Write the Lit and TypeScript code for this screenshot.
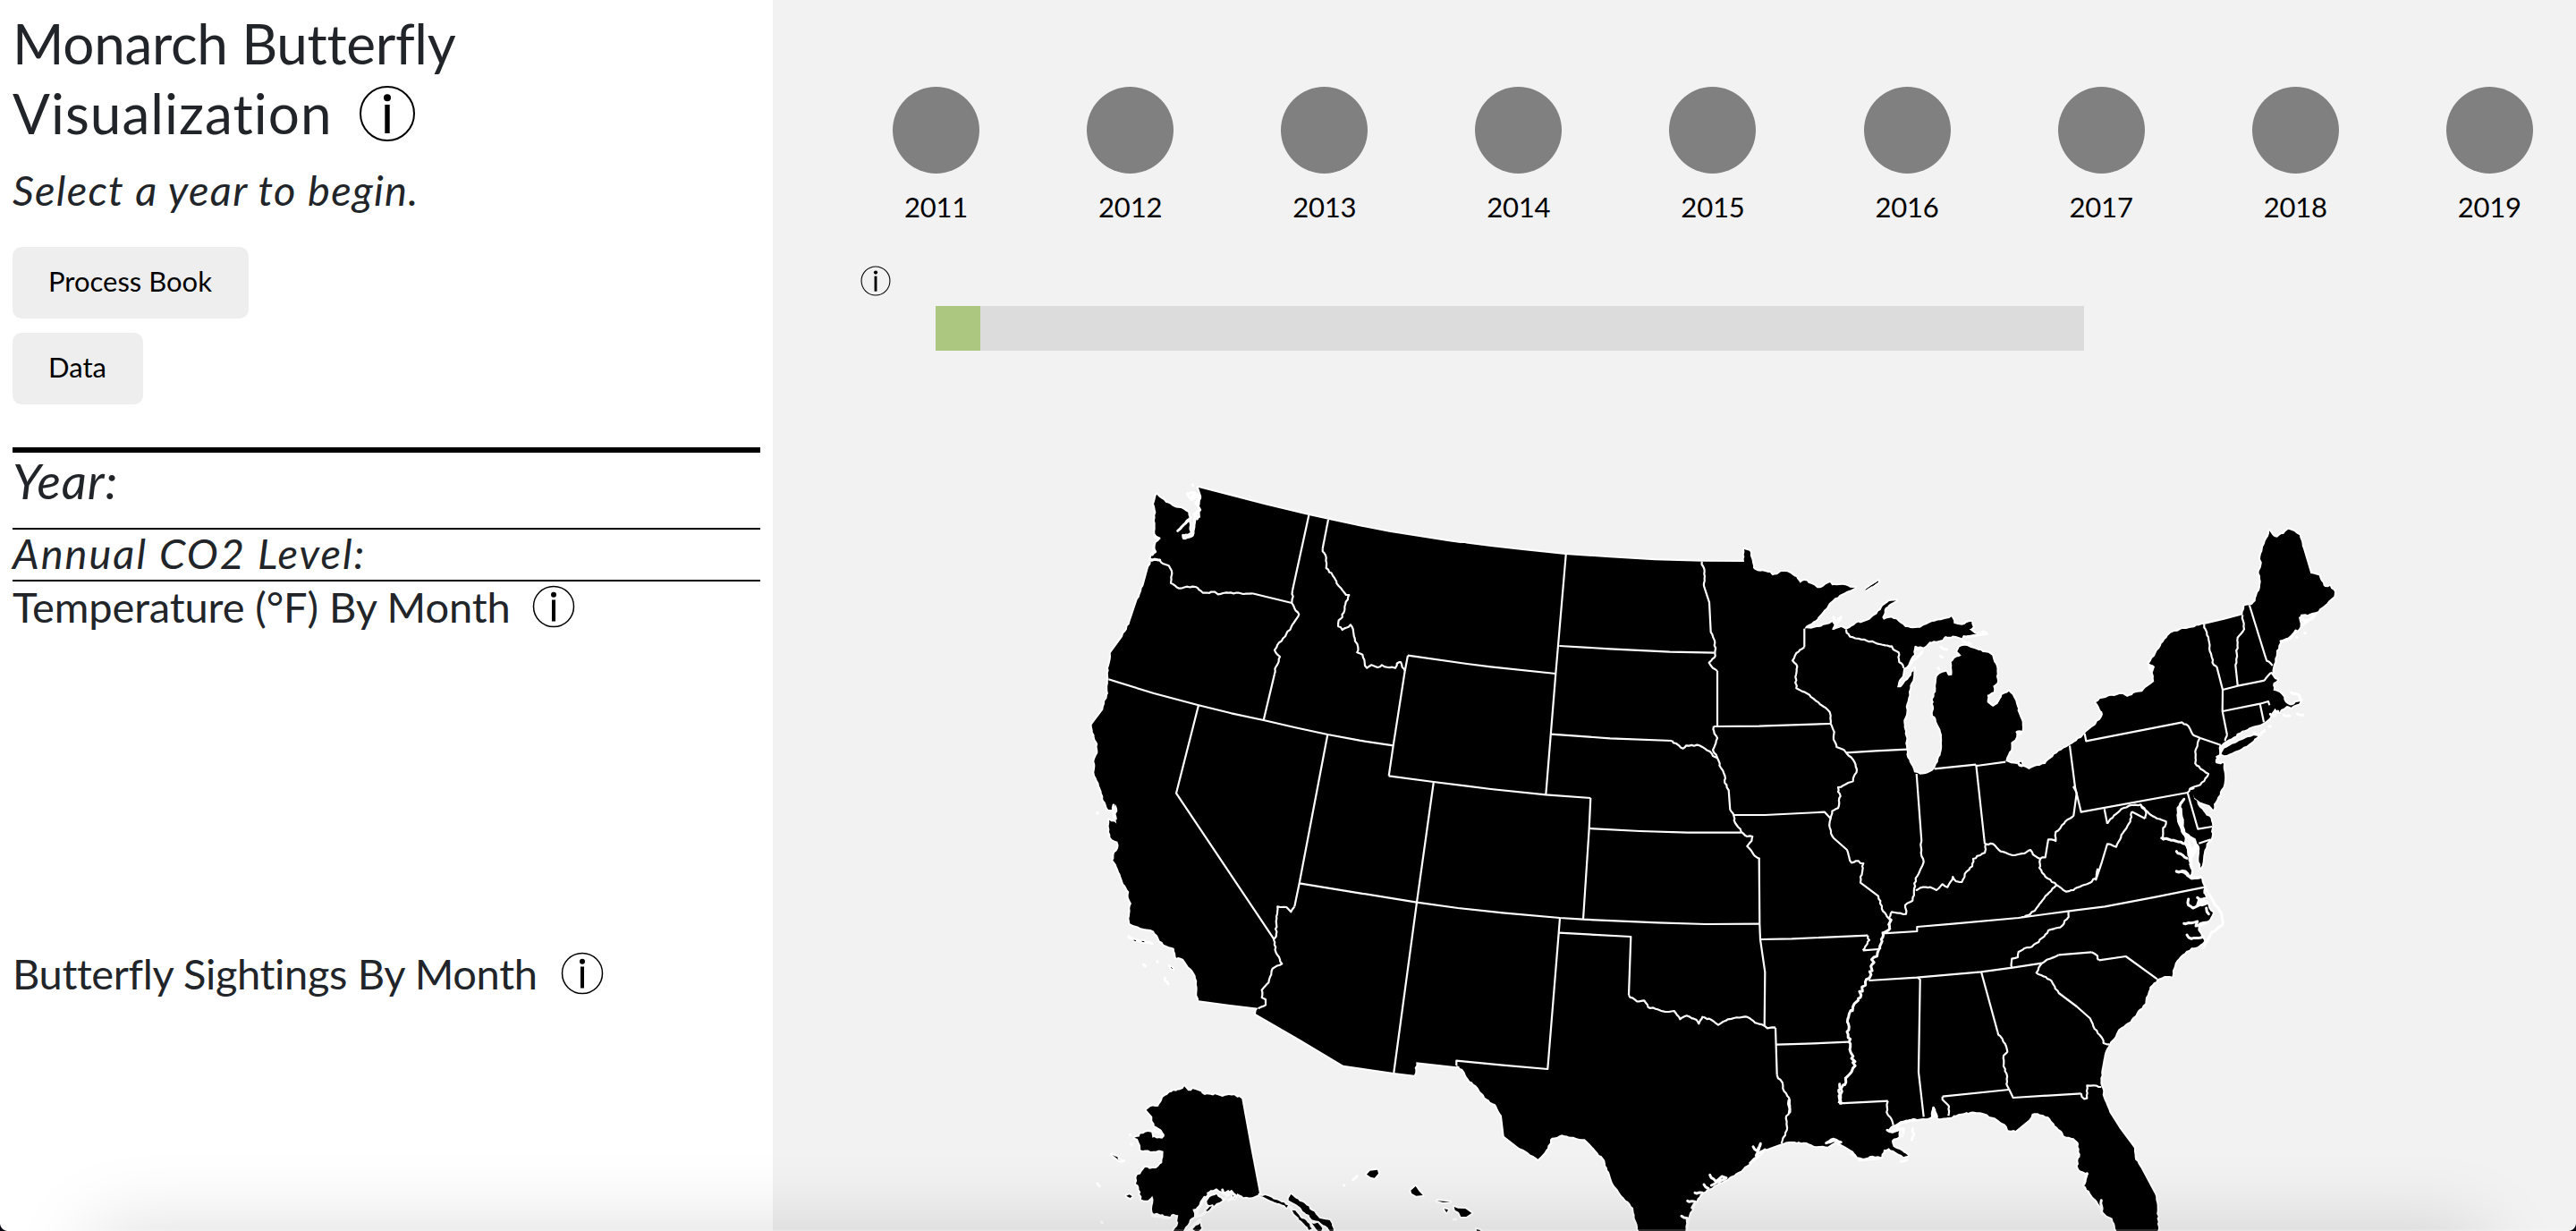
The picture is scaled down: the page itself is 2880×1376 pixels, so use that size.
import { LitElement, html, svg, css } from "lit";
import { customElement, property } from "lit/decorators.js";

type Pt = [number, number];

/* The map is digitised in tiles, three units to a pixel; each tile has its own origin. */
const TILES: Record<string, Pt> = {
  A: [1200, 520],
  B: [1200, 880],
  C: [1600, 560],
  D: [1620, 900],
  E: [1920, 600],
  F: [2260, 570],
  G: [2000, 960],
};

/** Parses "A x,y x,y B x,y ..." into page points. */
function points(src: string): Pt[] {
  let origin: Pt = [0, 0];
  const out: Pt[] = [];
  for (const token of src.trim().split(/\s+/)) {
    if (TILES[token]) {
      origin = TILES[token];
      continue;
    }
    const [x, y] = token.split(",").map(Number);
    out.push([origin[0] + x / 3, origin[1] + y / 3]);
  }
  return out;
}

/** Adds small irregularities to short segments, leaving surveyed straight lines alone. */
function roughen(pts: Pt[], amount: number): Pt[] {
  let seed = 7;
  const rnd = () => {
    seed = (seed * 16807) % 2147483647;
    return seed / 2147483647 - 0.5;
  };
  const out: Pt[] = [pts[0]];
  for (let i = 1; i < pts.length; i++) {
    const [ax, ay] = pts[i - 1];
    const [bx, by] = pts[i];
    const len = Math.hypot(bx - ax, by - ay);
    if (len > 4 && len < 19) {
      const n = Math.round(len / 3);
      for (let k = 1; k < n; k++) {
        const t = k / n;
        out.push([ax + (bx - ax) * t + rnd() * amount, ay + (by - ay) * t + rnd() * amount]);
      }
    }
    out.push([bx, by]);
  }
  return out;
}

function path(src: string, amount = 0, close = false): string {
  const pts = amount ? roughen(points(src), amount) : points(src);
  return "M" + pts.map((p) => p[0].toFixed(1) + " " + p[1].toFixed(1)).join("L") + (close ? "Z" : "");
}

const MAINLAND = `
A 420,75 640,132 790,168 855,182 960,205 1060,224 1160,240 1260,256 1320,264
C 100,140 200,153 300,164 450,180 600,190 750,199 908,203 1050,204 1050,162 1068,167 1073,190 1080,225 1095,235 1110,235 1138,240
E 178,122 185,130 200,127 212,118 235,118 252,128 265,135 278,155 292,147 305,155 325,163 335,172 355,167 378,153 385,163 410,162 430,163 445,170 462,170
425,188 395,205 370,232 345,262 315,290 292,308 315,308 340,303 385,286 392,296 385,312 400,308 415,303 432,312
445,305 465,290 490,286 510,278 525,265 540,250 555,232 575,217 600,213 575,228 560,245 553,270 558,278 575,272 600,277 615,290 630,303 655,307 680,305 700,295 720,285 750,280 785,268
793,290 810,295 830,293 853,285 857,302 845,310 858,320 870,327 850,330 825,330 820,340 800,333 765,333 755,345 735,350 712,352 700,365 690,372 670,375 660,372 660,395 648,410 640,430 625,440
622,460 610,480 603,505 615,505 630,485 645,470 660,440 658,465 650,490 642,520 640,540 632,570 634,590 625,615 626,640 632,670 634,712 637,740 650,765 660,790 680,797 705,793 728,778 740,755 750,725 753,690 750,655 735,620 722,590 726,570 722,545 733,520 735,480
743,462 755,455 768,452 775,466 787,464 785,420 795,408 818,398 805,385 812,370 830,365 850,372 870,378 900,388 922,398 925,410 932,425 938,460 938,490 925,500 927,520 905,530 905,555 925,570 940,560 955,530 978,518 990,530 1000,550 1010,590 1022,620 1022,650 1005,650 998,680 985,690 985,715 970,740 967,752 985,760 1005,762 1020,755 1025,770 1045,780 1065,770 1100,762 1130,730 1160,710 1180,700
F 185,775 212,750 235,730 262,705 273,685 262,665 250,645 270,632 300,623 340,618 355,627 385,612 405,610 425,590 445,575 440,545 447,525 428,515 447,490 462,465 480,435 500,413 512,408 560,397 613,384 680,368 742,352 748,322 765,320
785,305 790,285 798,270 803,240 797,205 805,185 802,155 815,115 832,70 845,88 858,92 880,80 895,65 915,72 933,85 945,130 970,213 998,220 1005,238 1018,258 1035,255 1050,275 1048,290 1030,305 1010,325 995,340 975,345 960,352 940,350 930,360 935,380 930,400 910,415 890,435 875,435 862,455 855,480 850,510 843,530 842,545 838,550 845,560 858,570 845,580 845,605 865,612 880,628 885,645 900,655 915,652 937,638 930,650 905,662 890,657 880,665 865,678 850,665 840,680 832,698 815,712 790,722 740,740 710,762 683,777
668,790 665,820 655,835 665,850 678,850 680,880 680,915 665,955 650,980 643,1005 630,990 600,980 580,965 573,940 578,960 590,985 610,1010 635,1035 640,1062 635,1105 620,1120 612,1150 608,1180 600,1200 595,1170 598,1135 590,1120 575,1110 565,1090 550,1080 545,1050 540,1020 535,995 545,970 530,985 522,1015 522,1045 535,1080 548,1100 545,1115 555,1140 560,1165 562,1190 570,1210 565,1235 600,1235
G 1380,60 1395,95 1390,115 1398,128 1372,135 1365,155 1385,160 1405,152 1408,165 1422,180 1410,205 1375,215 1372,240 1385,262 1393,275 1375,292 1350,298 1320,320 1295,350 1285,395 1260,393 1235,403 1210,430 1197,465 1195,485 1170,510 1145,545 1105,572 1095,595 1075,620 1060,650 1052,690 1045,735 1048,762 1055,800 1075,850 1110,905 1158,970 1160,1000 1185,1045 1228,1125 1235,1180 1239,1235 1230,1270
1110,1270 1095,1240 1085,1205 1060,1190 1045,1165 1020,1135 990,1095 1005,1055 985,1048 972,1040 968,1030 977,990 970,950 955,937 930,932 900,900 870,865 835,853 815,855 805,875 760,912 735,910 725,890 690,868 650,852 610,848 570,855 535,867 500,870 492,838 482,835 477,865 450,870 410,872 375,880 350,893 332,912 345,920 370,912 368,932 345,945 350,965 380,980 400,995 385,1000 360,985 335,970 318,975 310,1000 280,995 250,1005 230,1000 215,980 180,960 155,945 130,965 85,963 50,950 0,948
D 1115,1135 1060,1155 1020,1190 985,1220 940,1248 890,1275 850,1300 820,1340 805,1375 790,1440
640,1440 625,1390 618,1350 580,1310 548,1265 530,1215 518,1185 485,1150 455,1120 410,1112 378,1105 345,1115 320,1165 298,1187 265,1165 230,1145 185,1110 178,1050 160,1010 120,980 90,940 60,912 45,885 25,873
B 1285,937 1150,922 1143,965 1075,957 905,932 760,845 612,760 620,740 520,728 420,715 415,690 415,650 400,615 375,585 360,572 345,572 338,540 320,535 290,515 270,482 240,475 190,457 187,440 195,390 185,370 187,350 165,315 150,275 133,245 138,220 150,205 148,182 130,175 120,150 120,110 145,122 137,95 148,80 142,58 130,75 118,75 102,45
A 100,1110 85,1065 70,1030 72,985 82,965 82,935 65,895 62,870 100,820 105,795 117,765 115,738 118,715 117,680 125,650 125,630 165,575 190,525 215,450 235,405 250,350 260,325 262,305 275,285 275,268 290,245 275,235 275,195 275,150 270,130 280,98 310,125 350,143 385,158 390,178 350,218 388,190 392,225 365,235 368,250 400,240 408,200 412,182 426,175 422,140 430,105`;

const LONG_ISLAND = "F 680,800 700,790 730,775 760,762 795,755 770,780 730,805 705,815 680,823 670,818";

const ALASKA = `B 245,1082 258,1072 285,1070 300,1040 335,1018 358,1015 372,1003 385,1018 400,1012 420,1018 440,1032 475,1030 500,1038 540,1033 565,1045
595,1210 625,1367 600,1375 570,1375 550,1362 540,1380 520,1350 505,1360 480,1345 455,1355 440,1375 425,1400 400,1415 405,1440 375,1475 365,1495
335,1495 352,1460 352,1435 335,1430 325,1440 300,1432 270,1430 265,1405 265,1370 250,1385 228,1382 220,1340 210,1330 215,1300 240,1275 255,1280 285,1272 298,1260 302,1220 270,1220 225,1215 220,1190 205,1175 235,1162 262,1157 265,1175 298,1178 305,1165 295,1148 272,1135 265,1105`;

const ALASKA_ISLES = [
  "B 625,1367 655,1372 690,1387 720,1402 715,1410 690,1395 660,1385",
  "B 722,1385 730,1365 745,1378 775,1395 800,1420 825,1445 860,1452 872,1480 868,1495 845,1470 820,1455 800,1450 775,1425 750,1400",
  "B 730,1410 745,1420 760,1440 780,1452 800,1480 790,1485 765,1455 740,1430",
  "B 800,1462 820,1460 835,1480 830,1492 815,1482",
  "B 448,1388 465,1370 480,1365 500,1385 480,1395 470,1405 450,1398",
  "B 445,1418 465,1405 460,1412 448,1422",
  "B 400,1482 425,1462 430,1478 415,1492",
  "B 178,1370 188,1366 197,1372 190,1377",
  "B 130,1232 138,1237 148,1240 160,1252 150,1248",
];

const HAWAII = [
  "B 984,1298 995,1286 1020,1283 1023,1295 1010,1310 997,1307",
  "B 1132,1352 1148,1338 1160,1355 1172,1368 1150,1370 1135,1362",
  "B 1220,1387 1240,1388 1264,1390 1240,1392",
  "B 1244,1414 1257,1417 1252,1426",
  "B 1277,1407 1290,1412 1315,1413 1336,1428 1318,1440 1300,1440 1293,1425 1280,1418",
  "B 1352,1482 1362,1484 1375,1496 1355,1496",
];

const SMALL_ISLES = [
  "E 497,178 515,165 540,150 520,165",
  "B 203,513 210,515",
  "B 230,517 238,518",
  "B 328,604 332,608",
];

const STRAIGHT = [
  "A 790,168 735,420",
  "A 855,182 836,280",
  "A 600,430 733,462",
  "A 675,700 638,855",
  "A 118,718 270,765 420,805 530,832 638,855 745,880 853,903 960,923 1073,940",
  "A 420,805 345,1100 B 672,508",
  "A 853,903 B 758,322 742,400",
  "A 1122,638 1112,690 1073,940 1058,1042",
  "A 1122,638 1320,666 C 200,556 418,579",
  "A 1058,1042 1208,1062 1320,1076 C 200,966 385,985 535,996",
  "A 1208,1065 B 1152,386 1075,957",
  "B 758,322 960,355 1152,386 1290,405 1440,421 D 372,378 450,383 700,394 860,399 1042,398",
  "C 452,180 418,579 385,985",
  "C 430,486 600,496 800,506 950,509",
  "C 402,782 600,796 808,804",
  "C 960,570 960,755",
  "C 948,756 1100,755 E 160,634 380,627",
  "C 1015,1053 1120,1053 E 160,933 360,923 380,945",
  "C 535,996 530,1098 D 450,383",
  "C 530,1098 700,1107 860,1112 1040,1112",
  "D 1040,178 1042,398 1044,450 1060,560 1058,740",
  "D 372,378 368,428 331,885 180,872 25,857 25,873",
  "D 368,428 610,441 603,637",
  "D 1095,746 1100,905",
  "D 1044,450 1150,448 G 265,257",
  "G 248,307 300,303",
  "D 1098,803 1200,800 G 200,614",
  "G 168,820 332,812",
  "E 292,308 292,370",
  "E 433,724 530,718 636,713",
  "E 668,795 685,1020",
  "E 728,778 867,764",
  "E 870,768 967,755",
  "E 868,764 897,1030",
  "G 315,250 430,243 430,228 550,218 770,198 940,175 1060,160 1230,128 1395,95",
  "G 268,408 430,398 645,379 750,365 848,350",
  "G 905,322 1015,313",
  "G 1040,340 1130,327 1235,403",
  "G 432,398 440,405 435,715 452,865",
  "G 645,379 700,580",
  "G 738,772 752,801 980,787",
  "G 738,774 515,797",
  "F 162,790 180,930 200,1013 557,948 592,1070 640,1062",
  "F 212,750 217,775 540,712",
  "F 600,765 668,788",
  "F 278,1003 288,1052",
  "F 415,1035 370,1012",
  "F 595,1118 635,1105",
  "F 655,525 675,603 674,675 690,755",
  "F 675,603 725,590 815,572",
  "F 765,320 820,498",
  "F 675,675 800,650 828,642 832,655",
  "F 800,650 813,712",
];

const WINDING = [
  "A 735,420 737,440 733,462 742,480 757,500 745,520 715,565 690,595 675,620 680,630 693,642 680,675 675,700",
  "A 836,280 848,310 848,345 870,370 890,405 915,435 925,435 910,475 902,510 890,520 888,540 902,552 915,545 930,535 938,550 945,590 955,610 952,628 970,635 978,672 985,680 1000,670 1020,678 1035,670 1055,678 1080,680 1085,665 1098,660 1112,690",
  "A 258,318 290,318 300,330 320,337 330,355 327,395 355,413 380,407 410,408 435,428 475,425 485,433 520,428 545,428 570,432 600,430",
  "B 742,400 730,418 715,402 685,400 680,450 680,500 672,510 680,555 700,592 668,608 655,655 632,680 632,705 645,712 645,730 620,742",
  "C 908,203 917,235 915,285 933,340 938,440 952,475 952,510 950,525 932,542 945,560 960,570",
  "C 808,804 845,830 855,820 900,820 935,840 945,855 960,862",
  "C 948,755 950,780 960,795 945,835 960,862 972,895 985,920 985,945 998,970 1003,1035 1015,1055 1020,1080 1040,1110 1060,1125 1078,1125 1075,1140 1060,1158 1085,1190 1103,1200",
  "D 603,637 630,658 655,655 668,678 700,685 725,693 755,690 775,718 797,706 830,720 838,733 850,710 880,720 903,737 935,718 965,712 1000,710 1035,732 1058,740 1068,748 1095,746",
  "D 1100,905 1118,930 1120,950 1143,990 1143,1020 1130,1050 1133,1090 1115,1135",
  "G 265,257 270,272 248,307",
  "G 332,812 328,850 345,875 350,893",
  "E 292,370 265,390 252,415 268,435 262,470 265,508 300,525 330,550 370,580 380,600 380,627 392,655 390,680 400,705 425,715 433,725 460,755 468,780 455,820 405,840 405,855 413,870 405,910 385,920 380,945 377,975 390,1010 435,1050 450,1093 465,1087 490,1095 480,1140 G 240,80 300,125 315,175 335,200",
  "E 432,312 445,335 500,348 545,360 585,367 590,378 608,388 610,420 622,430 625,440",
  "E 685,1020 683,1060 692,1090 675,1130 G 425,65 420,100 415,140 390,155 393,185 365,182 345,178 335,200",
  "G 425,105 450,95 475,95 495,105 515,85 532,95 550,60 560,75 580,78 590,50 615,25 E 858,1080 897,1060 900,1030 925,1030 950,1055 990,1068 1030,1062 1050,1050 1065,1070 1083,1080 1100,1075 1110,1015 1135,1020 1135,990 1155,968 1190,940 F 175,1025 185,950 175,930 182,925",
  "E 1083,1080 1083,1105 G 840,30 860,60 898,88 930,110 960,100 1000,85 1030,65 1035,35 F 250,1240 270,1180 288,1120 318,1130 335,1090 365,1045 370,1012",
  "G 898,88 860,125 835,160 810,185 780,195",
  "G 748,365 748,335 768,330 770,312 790,300 815,295 850,265 870,240 910,230 938,195 938,175",
  "G 848,350 875,335 905,322",
  "G 1015,313 1025,318 1035,325 1040,340",
  "G 700,580 725,620 733,647 720,660 720,695 730,720 730,755 738,772",
  "G 980,787 990,805 1000,803 1000,760 1020,760 1048,765",
  "G 515,797 520,812 537,830 535,862",
  "G 848,350 830,382 875,405 905,450 965,495 1010,535 1025,570 1050,600 1055,618 1075,622",
  "F 540,712 560,725 570,745 580,757 600,765",
  "F 668,788 667,822 655,828 662,835",
  "F 598,765 583,810 583,850 600,868 627,885 600,922 565,935 557,948",
  "F 565,935 580,933",
  "F 288,1052 310,1025 335,1003 370,990 400,988 415,1005 430,1020 455,1035 485,1045 475,1075 475,1105 500,1105",
  "F 400,988 418,1012 415,1035",
  "F 613,384 628,435 632,475 645,520 655,525",
  "F 690,755 683,775",
  "F 742,352 747,400 725,428 722,480 718,520 725,588",
  "F 815,572 828,555 842,545",
  "F 820,498 842,522",
];

const MISSISSIPPI =
  "G 335,200 343,205 338,235 315,248 310,270 305,300 285,330 275,360 270,400 245,430 240,465 215,495 200,530 195,580 202,614 208,650 222,680 210,715 190,735 175,770 168,820";

/* Inlets, sounds and barrier islands that are little more than outline. */
const INLETS = [
  "A 385,100 395,110 410,95 425,110 410,125 425,150 405,165 415,180",
  "A 382,95 405,92 415,105 395,115",
  "A 400,66 402,68",
  "A 410,170 405,200 400,235 375,245 368,235",
  "A 395,175 370,200 350,220",
  "A 272,235 288,245",
  "A 270,270 275,290 265,300",
  "A 258,315 290,318",
  "B 80,86 83,87",
  "B 135,60 135,85 142,105",
  "B 185,500 205,512 240,518 265,525",
  "B 235,594 242,600",
  "B 281,584 283,586",
  "B 322,598 335,610",
  "B 307,640 318,660",
  "E 390,270 400,285 415,270 395,300",
  "E 875,325 890,318 905,325 840,335",
  "E 665,370 690,375 680,395 655,415 640,440",
  "E 750,370 770,378",
  "E 748,400 755,405",
  "E 820,345 835,355 850,360",
  "E 740,440 745,445",
  "E 1005,655 1018,660",
  "E 1010,760 1022,768",
  "F 545,970 525,1000 530,1040 545,1085 570,1100 590,1130 575,1160 560,1110",
  "F 555,1095 580,1105 585,1125 570,1145",
  "F 470,1100 510,1108 550,1120 565,1150 570,1200",
  "F 520,1145 555,1168",
  "F 520,1212 545,1215 570,1235 600,1232",
  "F 430,525 435,540 440,525",
  "F 660,830 655,845 668,848",
  "F 940,355 950,372 975,365 985,350 945,385",
  "F 950,412 952,414",
  "F 922,425 924,427",
  "F 870,440 900,432 920,405",
  "F 905,612 930,620 937,640",
  "F 880,688 900,690",
  "F 925,683 945,688",
  "F 835,685 850,690 860,675",
  "F 780,748 800,755 815,740",
  "F 830,725 835,727",
  "F 680,785 715,765",
  "G 1395,95 1425,145 1450,180 1455,220 1415,250 1388,300",
  "G 1340,135 1340,155 1355,165 1385,150 1370,130 1400,145",
  "G 1325,217 1350,215 1370,210 1365,225 1400,215",
  "G 1335,255 1350,268 1390,262",
  "G 1400,165 1408,185",
  "G 1300,42 1330,42 1350,65 1378,62",
  "G 415,905 420,925 412,942",
  "G 330,910 350,915 375,885 420,875",
  "G 355,910 385,905 380,930",
  "G 485,835 488,862",
  "G 375,1015 395,1010",
  "G 235,1010 300,1005",
  "G 210,990 220,995",
  "G 130,950 160,945 170,960",
  "G 1000,1055 990,1090",
  "G 1048,1145 1050,1190",
  "G 0,810 3,850",
  "D 1310,935 1318,960 1308,975 1315,1000",
  "D 1020,1145 1035,1160 1045,1135 1030,1175 1060,1155",
  "D 1010,1200 1040,1175",
  "D 875,1240 895,1262 915,1245 930,1250 880,1275",
  "D 855,1272 870,1285",
  "D 825,1300 850,1300",
  "D 800,1327 825,1330 815,1350",
  "D 780,1378 800,1385 798,1420",
  "D 1265,1133 1290,1120 1315,1130",
  "B 80,1328 88,1338",
  "B 270,1150 300,1165",
  "B 190,1165 192,1167",
  "B 194,1196 196,1198",
  "B 128,1230 160,1255 170,1252",
  "B 907,1334 909,1335",
  "B 938,1316 952,1304",
  "B 1276,1450 1284,1448",
  "B 500,1350 515,1370 530,1355 545,1370 520,1385",
  "B 440,1375 420,1410 410,1440 430,1435 455,1415 510,1380",
  "B 730,1410 800,1480",
  "B 95,1458 97,1460",
  "B 380,1490 425,1450",
  "B 265,1435 320,1445",
];

@customElement("info-mark")
export class InfoMark extends LitElement {
  @property({ type: Number }) size = 48;
  @property({ type: Number }) line = 2;

  static styles = css`
    :host {
      display: block;
      flex: none;
      line-height: 0;
    }
  `;

  render() {
    return html`<svg width=${this.size} height=${this.size} viewBox="0 0 64 64" role="img" aria-label="Info">
      <circle cx="32" cy="32" r=${31 - this.line / 2} fill="none" stroke="#000" stroke-width=${this.line}></circle>
      <circle cx="32" cy="14.2" r="4" fill="#000"></circle>
      <rect x="29.3" y="22" width="5.4" height="32" fill="#000"></rect>
    </svg>`;
  }
}

@customElement("state-map")
export class StateMap extends LitElement {
  static styles = css`
    :host {
      display: block;
      line-height: 0;
    }
    .land {
      fill: #000;
      stroke: #fff;
      stroke-width: 4;
      stroke-linejoin: round;
      paint-order: stroke;
    }
    .border {
      fill: none;
      stroke: #fff;
      stroke-width: 2.2;
      stroke-linejoin: round;
    }
    .river {
      fill: none;
      stroke: #fff;
      stroke-width: 3;
      stroke-linejoin: round;
    }
    .inlet {
      fill: none;
      stroke: #fff;
      stroke-width: 3;
      stroke-linejoin: round;
      stroke-linecap: round;
    }
    .halo {
      fill: #fff;
      stroke: #fff;
      stroke-width: 5;
      stroke-linejoin: round;
    }
    .speck {
      fill: #000;
      stroke: #000;
      stroke-width: 1;
    }
  `;

  render() {
    return html`<svg width="2016" height="984" viewBox="864 392 2016 984">
      <path class="land" d=${path(MAINLAND, 1.7, true)}></path>
      <path class="land" d=${path(LONG_ISLAND, 1.2, true)}></path>
      <path class="land" d=${path(ALASKA, 2.4, true)}></path>
      ${INLETS.map((s) => svg`<path class="inlet" d=${path(s, 1.5)}></path>`)}
      ${ALASKA_ISLES.map((s) => svg`<path class="land" d=${path(s, 2.4, true)}></path>`)}
      ${HAWAII.map((s) => svg`<path class="land" d=${path(s, 0, true)}></path>`)}
      ${SMALL_ISLES.map((s) => svg`<path class="halo" d=${path(s)}></path><path class="speck" d=${path(s)}></path>`)}
      ${STRAIGHT.map((s) => svg`<path class="border" d=${path(s)}></path>`)}
      ${WINDING.map((s) => svg`<path class="border" d=${path(s, 1.7)}></path>`)}
      <path class="river" d=${path(MISSISSIPPI, 4.4)}></path>
    </svg>`;
  }
}

@customElement("app-root")
export class AppRoot extends LitElement {
  private years = [2011, 2012, 2013, 2014, 2015, 2016, 2017, 2018, 2019];

  static styles = css`
    :host {
      display: block;
      font-family: Optima, Lato, "Open Sans", sans-serif;
      color: #212529;
      font-variant-ligatures: none;
    }
    .page {
      position: relative;
      display: flex;
      width: 2880px;
      height: 1376px;
      overflow: hidden;
      background: #fff;
    }
    aside {
      box-sizing: border-box;
      width: 864px;
      flex: none;
      padding: 9px 14px 0;
      white-space: nowrap;
    }
    h1,
    h2,
    p {
      margin: 0;
      font-weight: 400;
    }
    h1 {
      font-size: 62px;
      line-height: 78px;
    }
    .first {
      display: block;
      letter-spacing: -0.3px;
    }
    .second {
      display: flex;
      align-items: center;
      letter-spacing: 1.05px;
    }
    .second span {
      width: 387px;
    }
    .second info-mark {
      margin-top: 2px;
    }
    .hint {
      margin-top: 18px;
      font-size: 47px;
      line-height: 58px;
      font-style: italic;
      letter-spacing: 1.3px;
    }
    .actions {
      display: flex;
      flex-direction: column;
      align-items: flex-start;
      gap: 16px;
      margin: 35px 0 48px;
    }
    button {
      box-sizing: border-box;
      height: 80px;
      padding: 0 0 4px 40px;
      border: 0;
      border-radius: 10px;
      background: #eee;
      color: #000;
      font: 400 31px/76px Optima, Lato, sans-serif;
      text-align: left;
    }
    .book {
      width: 264px;
    }
    .data {
      width: 146px;
    }
    .year {
      border-top: 6px solid #000;
      border-bottom: 2px solid #000;
      padding-bottom: 22px;
      font-size: 55px;
      line-height: 62px;
      font-style: italic;
      letter-spacing: 0.9px;
    }
    .co2 {
      border-bottom: 2px solid #000;
      padding-bottom: 4px;
      font-size: 47px;
      line-height: 52px;
      font-style: italic;
      letter-spacing: 2px;
    }
    h2 {
      display: flex;
      align-items: center;
      font-size: 47px;
      line-height: 56px;
      letter-spacing: -0.1px;
    }
    .temp span {
      width: 581px;
    }
    .seen {
      margin-top: 354px;
      letter-spacing: -0.33px;
    }
    .seen span {
      width: 613px;
    }
    main {
      flex: 1;
      min-width: 0;
      overflow: hidden;
      background: #f2f2f2;
      color: #000;
    }
    .years {
      display: flex;
      padding: 97px 0 0 74px;
    }
    .tick {
      flex: none;
      width: 217.1px;
      display: flex;
      flex-direction: column;
      align-items: center;
      gap: 17px;
      font-size: 31px;
      line-height: 40px;
      letter-spacing: -0.2px;
    }
    .dot {
      width: 97px;
      height: 97px;
      border-radius: 50%;
      background: #808080;
    }
    .about {
      padding: 46px 0 11px 98px;
    }
    .track {
      display: flex;
      width: 1284px;
      height: 50px;
      margin-left: 182px;
      background: #dcdcdc;
    }
    .fill {
      width: 50px;
      background: #acc880;
    }
    .shade {
      position: absolute;
      left: 105px;
      right: 105px;
      top: 1376px;
      height: 200px;
      box-shadow: 0 0 90px rgba(0, 0, 0, 0.15);
    }
    .lip {
      position: absolute;
      left: 0;
      right: 0;
      bottom: 0;
      height: 2px;
      background: rgba(255, 255, 255, 0.17);
    }
    .corner {
      position: absolute;
      bottom: 0;
      width: 9px;
      height: 9px;
    }
    .left {
      left: 0;
      background: radial-gradient(circle at 100% 0, transparent 8.5px, #05050f 9.5px);
    }
    .right {
      right: 0;
      background: radial-gradient(circle at 0 0, transparent 8.5px, #05050f 9.5px);
    }
  `;

  render() {
    return html`<div class="page">
      <aside>
        <h1>
          <span class="first">Monarch Butterfly</span>
          <span class="second"><span>Visualization</span><info-mark .size=${64} .line=${2}></info-mark></span>
        </h1>
        <p class="hint">Select a year to begin.</p>
        <div class="actions">
          <button class="book">Process Book</button>
          <button class="data">Data</button>
        </div>
        <p class="year">Year:</p>
        <p class="co2">Annual CO2 Level:</p>
        <h2 class="temp"><span>Temperature (°F) By Month</span><info-mark .size=${48} .line=${2}></info-mark></h2>
        <h2 class="seen"><span>Butterfly Sightings By Month</span><info-mark .size=${48} .line=${2}></info-mark></h2>
      </aside>
      <main>
        <div class="years">
          ${this.years.map((y) => html`<div class="tick"><div class="dot"></div><span>${y}</span></div>`)}
        </div>
        <div class="about"><info-mark .size=${34} .line=${2}></info-mark></div>
        <div class="track"><div class="fill"></div></div>
        <state-map></state-map>
      </main>
      <div class="shade"></div>
      <div class="lip"></div>
      <div class="corner left"></div>
      <div class="corner right"></div>
    </div>`;
  }
}
